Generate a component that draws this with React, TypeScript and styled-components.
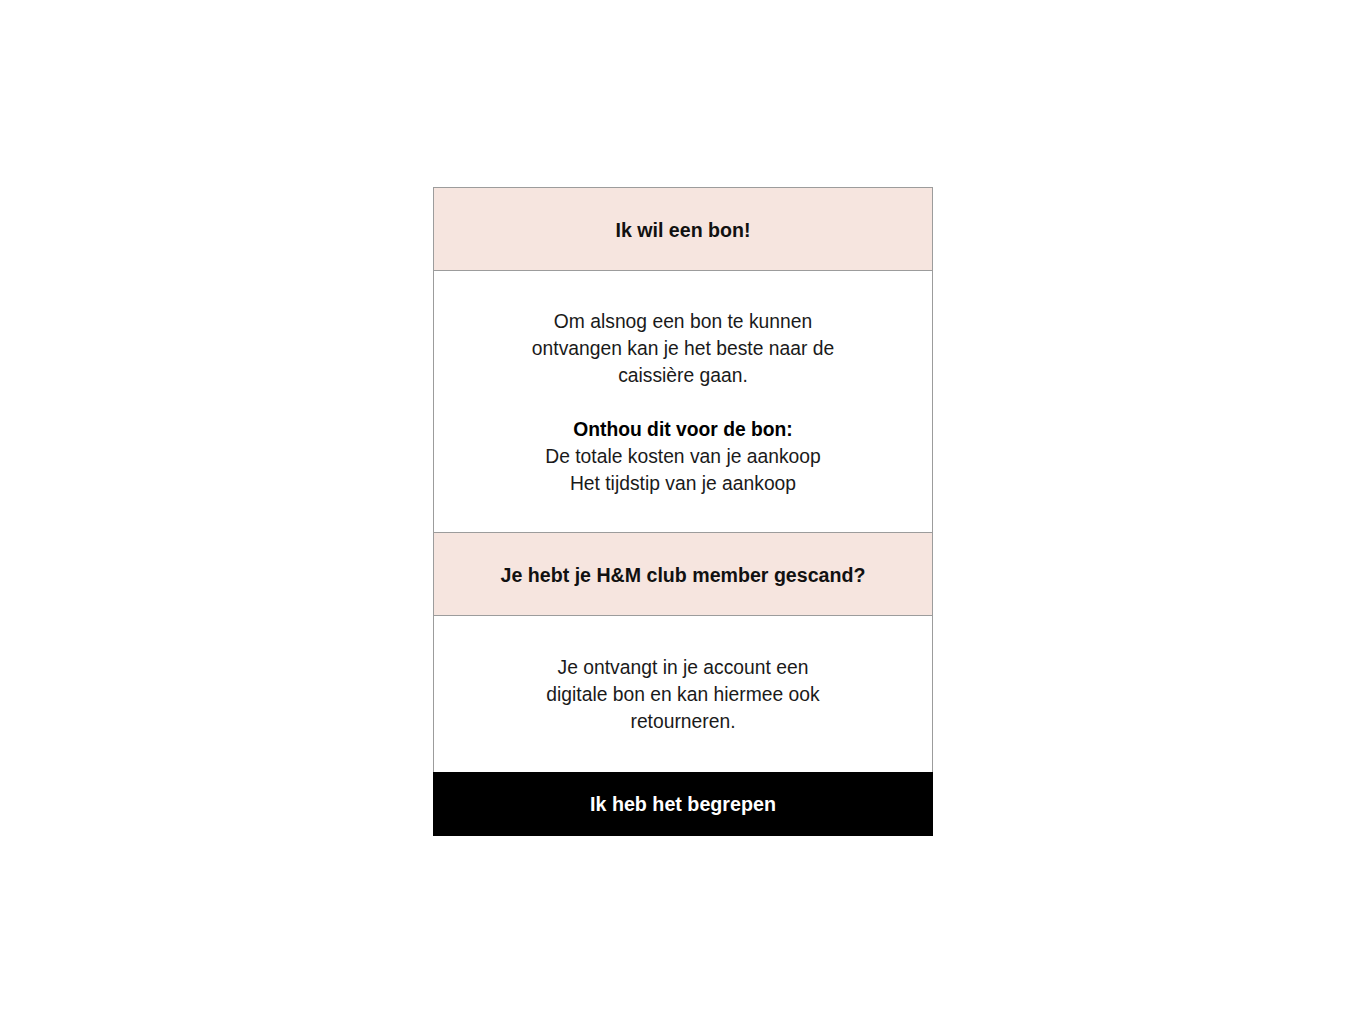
import React from "react";
import styled, { createGlobalStyle } from "styled-components";

const Global = createGlobalStyle`
  html, body { margin: 0; padding: 0; background: #ffffff; }
  body { font-family: "Liberation Sans", Arial, sans-serif; color: #000; }
`;

const Page = styled.div`
  min-height: 100vh;
  box-sizing: border-box;
  padding-bottom: 1px;
  display: flex;
  align-items: center;
  justify-content: center;
`;

const Card = styled.div`
  width: 500px;
  display: flex;
  flex-direction: column;
`;

const Framed = styled.div`
  border: 1px solid #9c9c9c;
  border-bottom: none;
  display: flex;
  flex-direction: column;
`;

const Header = styled.div<{ $h: number }>`
  height: ${(p) => p.$h}px;
  box-sizing: border-box;
  padding-top: 2px;
  background: #f6e5df;
  display: flex;
  align-items: center;
  justify-content: center;
  font-size: 19.6px;
  font-weight: 700;
  color: #111;
  border-bottom: 1px solid #9c9c9c;
`;

const Body = styled.div<{ $pt: number; $pb: number }>`
  padding: ${(p) => p.$pt}px 0 ${(p) => p.$pb}px;
  text-align: center;
  font-size: 19.3px;
  font-weight: 400;
  line-height: 27px;
  color: #1a1a1a;
  border-bottom: 1px solid #9c9c9c;
  &:last-child { border-bottom: none; }
`;

const Line = styled.div`
  white-space: nowrap;
`;

const Strong = styled.div`
  font-weight: 700;
  color: #000;
  margin-top: 27px;
`;

const Button = styled.button`
  height: 64px;
  width: 500px;
  border: none;
  background: #000;
  color: #fff;
  font-family: "Liberation Sans", Arial, sans-serif;
  font-size: 19.7px;
  font-weight: 700;
  cursor: pointer;
  padding: 0;
`;

export default function App() {
  return (
    <>
      <Global />
      <Page>
        <Card>
          <Framed>
            <Header $h={83}>Ik wil een bon!</Header>
            <Body $pt={37} $pb={35}>
              <Line>Om alsnog een bon te kunnen</Line>
              <Line>ontvangen kan je het beste naar de</Line>
              <Line>caissière gaan.</Line>
              <Strong>Onthou dit voor de bon:</Strong>
              <Line>De totale kosten van je aankoop</Line>
              <Line>Het tijdstip van je aankoop</Line>
            </Body>
            <Header $h={83}>Je hebt je H&amp;M club member gescand?</Header>
            <Body $pt={38} $pb={37}>
              <Line>Je ontvangt in je account een</Line>
              <Line>digitale bon en kan hiermee ook</Line>
              <Line>retourneren.</Line>
            </Body>
          </Framed>
          <Button>Ik heb het begrepen</Button>
        </Card>
      </Page>
    </>
  );
}
